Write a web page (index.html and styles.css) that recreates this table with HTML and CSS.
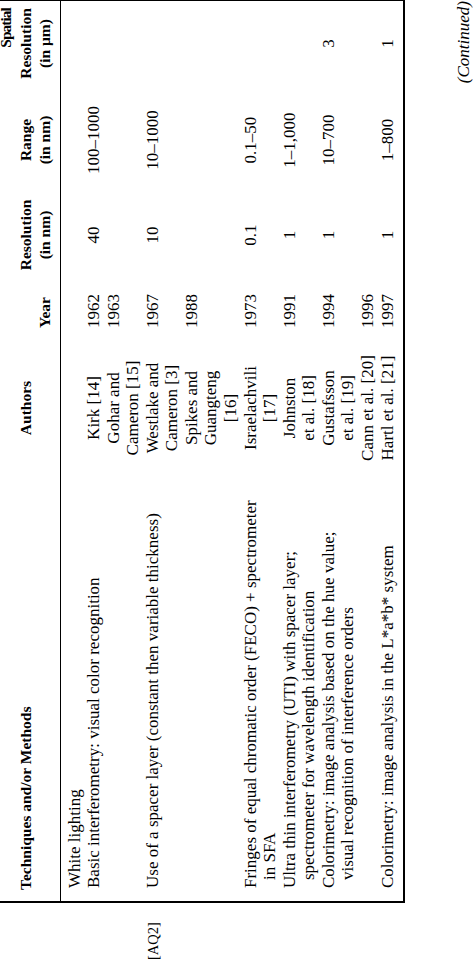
FILE: index.html
```html
<!DOCTYPE html>
<html lang="en">
<head>
<meta charset="utf-8">
<title>Table</title>
<link rel="stylesheet" href="styles.css">
</head>
<body>
<div class="page">
  <div class="sheet">
    <div class="aq">[AQ2]</div>
    <div class="main">
      <table class="data">
        <colgroup>
          <col class="w-tech"><col class="w-auth"><col class="w-year"><col class="w-res"><col class="w-rng"><col class="w-sp">
        </colgroup>
        <thead>
          <tr>
            <th class="c-tech h-mid">Techniques and/or Methods</th>
            <th class="c-auth h-mid">Authors</th>
            <th class="c-year">Year</th>
            <th class="c-res">Resolution<br>(in nm)</th>
            <th class="c-rng">Range<br>(in nm)</th>
            <th class="c-sp"><span class="stack"><span class="stack-l">Spatial</span>Resolution</span><br>(in μm)</th>
          </tr>
        </thead>
        <tbody>
          <tr class="r-first">
            <td class="c-tech"><div class="tx">White lighting</div></td>
            <td class="c-auth"></td><td class="c-year"></td><td class="c-res"></td><td class="c-rng"></td><td class="c-sp"></td>
          </tr>
          <tr>
            <td class="c-tech"><div class="tx">Basic interferometry: visual color recognition</div></td>
            <td class="c-auth">Kirk [14]</td><td class="c-year">1962</td><td class="c-res">40</td><td class="c-rng">100–1000</td><td class="c-sp"></td>
          </tr>
          <tr>
            <td class="c-tech"></td>
            <td class="c-auth">Gohar and<br>Cameron [15]</td><td class="c-year">1963</td><td class="c-res"></td><td class="c-rng"></td><td class="c-sp"></td>
          </tr>
          <tr>
            <td class="c-tech"><div class="tx">Use of a spacer layer (constant then variable thickness)</div></td>
            <td class="c-auth">Westlake and<br>Cameron [3]</td><td class="c-year">1967</td><td class="c-res">10</td><td class="c-rng">10–1000</td><td class="c-sp"></td>
          </tr>
          <tr>
            <td class="c-tech"></td>
            <td class="c-auth">Spikes and<br>Guangteng<br>[16]</td><td class="c-year">1988</td><td class="c-res"></td><td class="c-rng"></td><td class="c-sp"></td>
          </tr>
          <tr>
            <td class="c-tech"><div class="tx">Fringes of equal chromatic order (FECO) + spectrometer<br>in SFA</div></td>
            <td class="c-auth">Israelachvili<br>[17]</td><td class="c-year">1973</td><td class="c-res">0.1</td><td class="c-rng">0.1–50</td><td class="c-sp"></td>
          </tr>
          <tr>
            <td class="c-tech"><div class="tx">Ultra thin interferometry (UTI) with spacer layer;<br>spectrometer for wavelength identification</div></td>
            <td class="c-auth">Johnston<br>et al. [18]</td><td class="c-year">1991</td><td class="c-res">1</td><td class="c-rng">1–1,000</td><td class="c-sp"></td>
          </tr>
          <tr>
            <td class="c-tech"><div class="tx">Colorimetry: image analysis based on the hue value;<br>visual recognition of interference orders</div></td>
            <td class="c-auth">Gustafsson<br>et al. [19]</td><td class="c-year">1994</td><td class="c-res">1</td><td class="c-rng">10–700</td><td class="c-sp">3</td>
          </tr>
          <tr>
            <td class="c-tech"></td>
            <td class="c-auth">Cann et al. [20]</td><td class="c-year">1996</td><td class="c-res"></td><td class="c-rng"></td><td class="c-sp"></td>
          </tr>
          <tr class="r-last">
            <td class="c-tech"><div class="tx">Colorimetry: image analysis in the L*a*b* system</div></td>
            <td class="c-auth">Hartl et al. [21]</td><td class="c-year">1997</td><td class="c-res">1</td><td class="c-rng">1–800</td><td class="c-sp">1</td>
          </tr>
        </tbody>
      </table>
      <div class="cont">(Continued)</div>
    </div>
  </div>
</div>
</body>
</html>
```

FILE: styles.css
```css
html {
  margin: 0;
  padding: 0;
  background: #fff;
  overflow: hidden;
}

body {
  margin: 0;
  padding: 0;
  width: 474px;
  height: 962px;
}

.page {
  width: 963px;
  height: 478px;
  transform-origin: 0 0;
  transform: translate(-4px, 962px) rotate(-90deg);
  font-family: "Liberation Serif", "Times New Roman", serif;
  color: #000;
}

.sheet {
  display: flex;
  align-items: flex-start;
}

.aq {
  flex: none;
  width: 59px;
  box-sizing: border-box;
  padding: 148px 0 0 2px;
  font-size: 14.5px;
  line-height: 19.56px;
}

.main {
  flex: none;
  width: 904px;
}

.data {
  box-sizing: border-box;
  width: 904px;
  table-layout: fixed;
  border-collapse: separate;
  border-spacing: 0;
  border-left: 2px solid #000;
  border-right: 2px solid #000;
  border-bottom: 2px solid #000;
}

.w-tech { width: 437px; }
.w-auth { width: 112px; }
.w-year { width: 80px; }
.w-res { width: 74px; }
.w-rng { width: 116px; }
.w-sp { width: 81px; }

.data th {
  font-weight: bold;
  font-size: 15.5px;
  line-height: 19.5px;
  vertical-align: bottom;
  padding: 0 0 5px 0;
  border-bottom: 1px solid #000;
  white-space: nowrap;
}

.data th.h-mid {
  padding-bottom: 24.5px;
}

.data td {
  font-size: 17px;
  line-height: 19.56px;
  vertical-align: top;
  padding: 0;
  white-space: nowrap;
}

.data tr.r-first td { padding-top: 4px; }
.data tr.r-last td { padding-bottom: 6px; }

.data th.c-tech { text-align: left; padding-left: 11px; }
.data td.c-tech { text-align: left; padding-left: 13px; }

.tx {
  padding-left: 8px;
  text-indent: -8px;
}

.data .c-auth { text-align: center; }
.data .c-year { text-align: left; padding-left: 24px; }
.data .c-res { text-align: center; }
.data .c-rng { text-align: center; }
.data .c-sp { text-align: center; padding-right: 4px; }

.stack {
  display: inline-block;
  text-align: right;
}

.stack-l {
  display: block;
  letter-spacing: -1px;
}

.cont {
  margin-top: 48.5px;
  padding-right: 2px;
  text-align: right;
  font-style: italic;
  font-size: 17px;
  line-height: 19.56px;
}
```
